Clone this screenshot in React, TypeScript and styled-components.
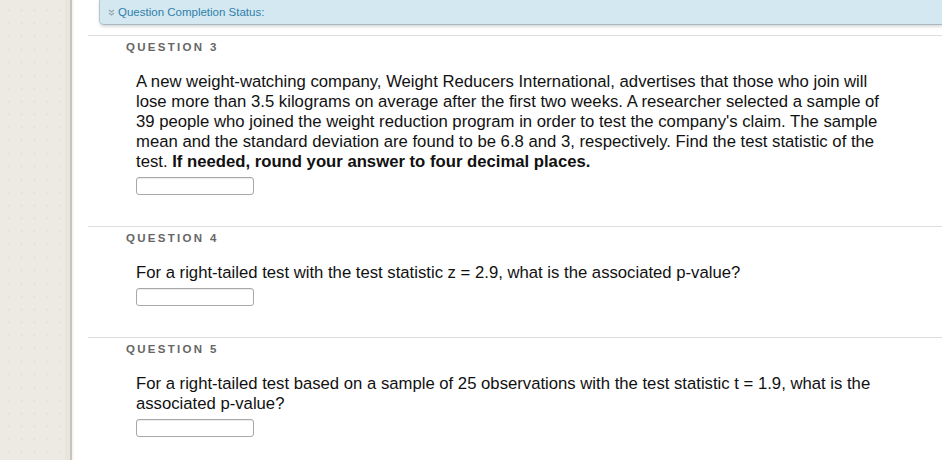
import React from 'react';
import styled, {createGlobalStyle} from 'styled-components';

const GlobalStyle = createGlobalStyle`
  html, body {
    margin: 0;
    padding: 0;
    background: #ffffff;
    font-family: "Liberation Sans", Arial, sans-serif;
  }
`;

const Page = styled.div`
  display: flex;
  width: 942px;
  height: 460px;
  overflow: hidden;
`;

const Sidebar = styled.div`
  flex: 0 0 70px;
  background-color: #edeae4;
  background-image: radial-gradient(circle, #e6e3dc 1.1px, transparent 1.5px);
  background-size: 13px 13px;
  background-position: 2px 4px;
  border-right: 2px solid #c6c4be;
  box-shadow: inset -5px 0 0 #e8e6dc, 2px 0 0 #f7f5ec;
`;

const Main = styled.div`
  flex: 1;
  display: flex;
  flex-direction: column;
  padding-left: 16px;
`;

const StatusBox = styled.div`
  flex-shrink: 0;
  margin: 0 0 10px 11px;
  height: 24px;
  display: flex;
  align-items: center;
  gap: 3px;
  padding-left: 8px;
  background: #d3e8f0;
  border-left: 1px solid #b4c6cf;
  border-bottom: 1px solid #a9b8c0;
  border-bottom-left-radius: 5px;
  box-shadow: 0 2px 3px rgba(0, 0, 0, 0.14);
  font-size: 11.5px;
  color: #2f80ab;
`;

const Section = styled.div`
  flex-shrink: 0;
  border-top: 1px solid #dedede;
  padding: 4px 0 31px 38px;
`;

const Label = styled.div`
  font-size: 11.5px;
  line-height: 14px;
  font-weight: bold;
  letter-spacing: 2.3px;
  color: #666666;
`;

const Body = styled.div`
  margin: 18px 0 0 10px;
  font-size: 16.7px;
  line-height: 20px;
  color: #111111;
  white-space: nowrap;
`;

const Answer = styled.div`
  margin-top: 5px;
  width: 116px;
  height: 16px;
  border: 1px solid #a8a8a8;
  border-radius: 3px;
  box-shadow: inset 0 1px 1px rgba(0, 0, 0, 0.08);
  background: #fff;
`;

const Chevron = () => (
    <svg width="7" height="7" viewBox="0 0 7 7">
        <path d="M1 1 L3.5 3 L6 1 M1 4 L3.5 6 L6 4" stroke="#9aa6ac" strokeWidth="1.2" fill="none"/>
    </svg>
);

interface QuestionProps {
    number: number,
    lines: React.ReactNode[],
}

const Question = ({number, lines}: QuestionProps) => (
    <Section>
        <Label>QUESTION {number}</Label>
        <Body>
            {lines.map((line, i) => <div key={i}>{line}</div>)}
            <Answer/>
        </Body>
    </Section>
);

export default function App() {
    return (
        <Page>
            <GlobalStyle/>
            <Sidebar/>
            <Main>
                <StatusBox>
                    <Chevron/>
                    Question Completion Status:
                </StatusBox>
                <Question
                    number={3}
                    lines={[
                        'A new weight-watching company, Weight Reducers International, advertises that those who join will',
                        'lose more than 3.5 kilograms on average after the first two weeks. A researcher selected a sample of',
                        "39 people who joined the weight reduction program in order to test the company's claim. The sample",
                        'mean and the standard deviation are found to be 6.8 and 3, respectively. Find the test statistic of the',
                        <>test. <b>If needed, round your answer to four decimal places.</b></>,
                    ]}
                />
                <Question
                    number={4}
                    lines={['For a right-tailed test with the test statistic z = 2.9, what is the associated p-value?']}
                />
                <Question
                    number={5}
                    lines={[
                        'For a right-tailed test based on a sample of 25 observations with the test statistic t = 1.9, what is the',
                        'associated p-value?',
                    ]}
                />
            </Main>
        </Page>
    );
}
